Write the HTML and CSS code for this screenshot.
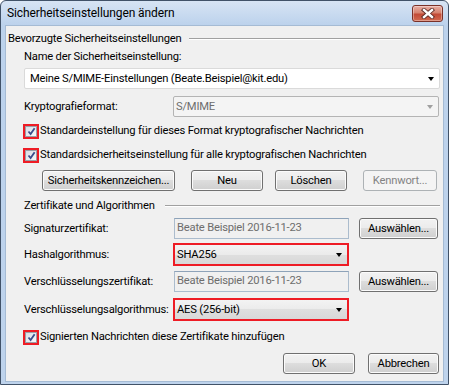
FILE: index.html
```html
<!DOCTYPE html>
<html lang="de">
<head>
    <meta charset="UTF-8">
    <title>Sicherheitseinstellungen ändern</title>
    <link rel="stylesheet" href="styles.css">
</head>
<body>
    <div class="window">
        <div class="titlebar">
            <span class="title">Sicherheitseinstellungen ändern</span>
            <span class="close">
                <svg width="14" height="11" viewBox="0 0 14 11">
                    <path d="M3 2 L11 9 M11 2 L3 9" stroke="#5a2a25" stroke-width="4.2" stroke-linecap="square"/>
                    <path d="M3 2 L11 9 M11 2 L3 9" stroke="#ffffff" stroke-width="2.4" stroke-linecap="square"/>
                </svg>
            </span>
        </div>

        <div class="client">
            <div class="group-title first"><span>Bevorzugte Sicherheitseinstellungen</span></div>

            <div class="group">
                <div class="label row-name">Name der Sicherheitseinstellung:</div>
                <div class="select plain row-select">
                    <span>Meine S/MIME-Einstellungen (Beate.Beispiel@kit.edu)</span>
                    <span class="arrow"></span>
                </div>

                <div class="field-row row-format">
                    <span class="label col">Kryptografieformat:</span>
                    <div class="select disabled wide">
                        <span>S/MIME</span>
                        <span class="arrow"></span>
                    </div>
                </div>

                <div class="check row-cb1">
                    <span class="box"><span class="inner"><svg width="9" height="9" viewBox="0 0 9 9"><path d="M1.5 4.5 L3.6 7 L7.6 1.2" fill="none" stroke="#3b4d8c" stroke-width="1.8"/></svg></span></span>
                    <span>Standardeinstellung für dieses Format kryptografischer Nachrichten</span>
                </div>
                <div class="check row-cb2">
                    <span class="box"><span class="inner"><svg width="9" height="9" viewBox="0 0 9 9"><path d="M1.5 4.5 L3.6 7 L7.6 1.2" fill="none" stroke="#3b4d8c" stroke-width="1.8"/></svg></span></span>
                    <span>Standardsicherheitseinstellung für alle kryptografischen Nachrichten</span>
                </div>

                <div class="button-row row-buttons">
                    <span class="btn b-kennz">Sicherheitskennzeichen...</span>
                    <span class="btn b-neu">Neu</span>
                    <span class="btn b-loeschen">Löschen</span>
                    <span class="btn b-kennwort disabled">Kennwort...</span>
                </div>

                <div class="group-title second"><span>Zertifikate und Algorithmen</span></div>

                <div class="field-row row-sig">
                    <span class="label col">Signaturzertifikat:</span>
                    <span class="textbox">Beate Beispiel 2016-11-23</span>
                    <span class="btn b-choose">Auswählen...</span>
                </div>
                <div class="field-row row-hash">
                    <span class="label col">Hashalgorithmus:</span>
                    <div class="select marked">
                        <span>SHA256</span>
                        <span class="arrow"></span>
                    </div>
                </div>
                <div class="field-row row-enc">
                    <span class="label col">Verschlüsselungszertifikat:</span>
                    <span class="textbox">Beate Beispiel 2016-11-23</span>
                    <span class="btn b-choose">Auswählen...</span>
                </div>
                <div class="field-row row-algo">
                    <span class="label col">Verschlüsselungsalgorithmus:</span>
                    <div class="select marked">
                        <span>AES (256-bit)</span>
                        <span class="arrow"></span>
                    </div>
                </div>

                <div class="check row-cb3">
                    <span class="box"><span class="inner"><svg width="9" height="9" viewBox="0 0 9 9"><path d="M1.5 4.5 L3.6 7 L7.6 1.2" fill="none" stroke="#3b4d8c" stroke-width="1.8"/></svg></span></span>
                    <span>Signierten Nachrichten diese Zertifikate hinzufügen</span>
                </div>
            </div>

            <div class="dialog-buttons">
                <span class="btn b-ok">OK</span>
                <span class="btn b-cancel">Abbrechen</span>
            </div>
        </div>
    </div>
</body>
</html>
```

FILE: styles.css
```css
body {
    margin: 0;
    padding: 0;
    background-color: #ffffff;
    font-family: 'Roboto', 'Open Sans', sans-serif;
    font-size: 11.2px;
    letter-spacing: -0.2px;
    line-height: 16px;
    color: #000;
}
.window {
    width: 449px;
    height: 385px;
    box-sizing: border-box;
    border: 1px solid #415268;
    border-radius: 6px 6px 0 0;
    background: linear-gradient(#d7e4f4, #bcd2ec 24px, #bed3ec);
    padding: 0 4px 2px 4px;
    display: flex;
    flex-direction: column;
}
.titlebar {
    height: 24px;
    display: flex;
    align-items: center;
    justify-content: space-between;
}
.title {
    margin-left: 2px;
    font-size: 12px;
    letter-spacing: -0.1px;
    color: #000;
}
.close {
    width: 31px;
    height: 17px;
    box-sizing: border-box;
    margin-right: 1px;
    border: 1px solid #7a3128;
    border-radius: 3px;
    background: linear-gradient(#e9aea4, #d6836f 45%, #c24a36 55%, #d26a50);
    box-shadow: inset 0 0 0 1px rgba(255,255,255,0.35);
    display: flex;
    align-items: center;
    justify-content: center;
}
.client {
    flex: 1;
    background-color: #f0f0f0;
    border: 1px solid #a5bbd4;
    padding: 5px 3px 0 2px;
}
.group-title {
    display: flex;
    align-items: center;
    height: 16px;
}
.group-title::after {
    content: "";
    flex: 1;
    margin-left: 8px;
    border-top: 1px solid #a0a0a0;
    border-bottom: 1px solid #ffffff;
    margin-top: -1px;
}
.group-title.second::after {
    margin-left: 10px;
}
.group {
    padding-left: 16px;
}
.label {
    height: 16px;
}
.col {
    width: 149px;
    flex: none;
}
.row-name { margin-top: 2px; }
.row-select { margin-top: 3px; }
.row-format { margin-top: 7px; }
.row-cb1 { margin-top: 6px; }
.row-cb2 { margin-top: 8px; }
.row-buttons { margin-top: 7px; }
.second { margin-top: 7px; }
.row-sig { margin-top: 4px; }
.row-hash { margin-top: 4px; }
.row-enc { margin-top: 5px; }
.row-algo { margin-top: 6px; }
.row-cb3 { margin-top: 8px; }

.field-row {
    display: flex;
    align-items: center;
}
.select {
    height: 21px;
    box-sizing: border-box;
    display: flex;
    align-items: center;
    justify-content: space-between;
    padding: 0 5px 0 5px;
    border-radius: 2px;
}
.select.plain {
    background-color: #fff;
    border: 1px solid #dadada;
}
.select.disabled {
    background-color: #f4f4f4;
    border: 1px solid #b4b4b4;
    color: #6d6d6d;
    padding-left: 2px;
}
.select.wide {
    width: 266px;
}
.select.marked {
    width: 176px;
    height: 23px;
    border: 2px solid #ee1c25;
    border-radius: 0;
    padding: 0 5px 0 2px;
    background: linear-gradient(#f3f3f3, #ebebeb 50%, #dfdfdf 50%, #d8d8d8);
}
.arrow {
    width: 0;
    height: 0;
    border-left: 3.5px solid transparent;
    border-right: 3.5px solid transparent;
    border-top: 4px solid #000;
}
.disabled .arrow {
    border-top-color: #a0a0a0;
}
.textbox {
    width: 175px;
    height: 21px;
    box-sizing: border-box;
    margin-left: 1px;
    padding: 1px 2px 0 2px;
    border: 1px solid #abbccd;
    border-top-color: #8ea3b9;
    background-color: #f0f0f0;
    color: #6d6d6d;
}
.check {
    display: flex;
    align-items: center;
    height: 16px;
    margin-left: -1px;
}
.box {
    width: 16px;
    height: 15px;
    box-sizing: border-box;
    border: 2px solid #ee1c25;
    margin-right: 1px;
    display: flex;
}
.inner {
    flex: 1;
    border: 1px solid #9aa0a8;
    background: linear-gradient(135deg, #d9dde6, #f7f8fa);
    display: flex;
    align-items: center;
    justify-content: center;
}
.btn {
    height: 21px;
    box-sizing: border-box;
    border: 1px solid #707070;
    border-radius: 3px;
    background: linear-gradient(#f2f2f2, #ebebeb 50%, #dddddd 50%, #cfcfcf);
    box-shadow: inset 0 0 0 1px #fbfbfb;
    display: flex;
    align-items: center;
    justify-content: center;
}
.btn.disabled {
    border-color: #adb2b5;
    background: #f4f4f4;
    box-shadow: none;
    color: #838383;
}
.button-row {
    display: flex;
    padding-left: 18px;
}
.b-kennz { width: 133px; }
.b-neu { width: 72px; margin-left: 16px; }
.b-loeschen { width: 72px; margin-left: 12px; }
.b-kennwort { width: 74px; margin-left: 16px; }
.b-choose {
    width: 79px;
    margin-left: 10px;
}
.dialog-buttons {
    display: flex;
    justify-content: flex-end;
    gap: 13px;
    margin-top: 8px;
    padding-right: 1px;
}
.b-ok { width: 72px; }
.b-cancel { width: 71px; }
```
